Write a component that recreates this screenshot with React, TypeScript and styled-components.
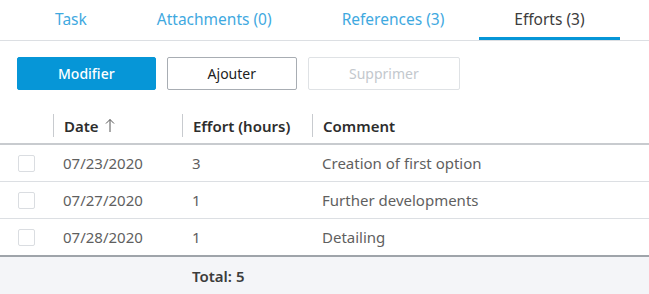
import * as React from 'react';
import styled, { createGlobalStyle } from 'styled-components';

const GlobalStyle = createGlobalStyle`
  body {
    margin: 0;
    background: #fff;
    font-family: "Noto Sans", "Open Sans", sans-serif;
    font-size: 15px;
    color: #3c3c3c;
  }
`;

const Page = styled.div`
  width: 649px;
  height: 294px;
  overflow: hidden;
  display: flex;
  flex-direction: column;
`;

const TabBar = styled.div`
  display: flex;
  padding-left: 20px;
  border-bottom: 1px solid #dcdfe3;
`;

const Tab = styled.div<{ $active?: boolean }>`
  height: 37px;
  padding: 0 35px;
  display: flex;
  align-items: center;
  justify-content: center;
  font-size: 15.5px;
  color: ${p => (p.$active ? '#3c3c3c' : '#3fa9df')};
  border-bottom: 3px solid ${p => (p.$active ? '#0696d7' : 'transparent')};
`;

const Toolbar = styled.div`
  display: flex;
  gap: 11px;
  padding: 16px 17px 0;
`;

const Button = styled.button<{ $variant?: 'primary' | 'default' | 'disabled' }>`
  height: 33px;
  padding: 0 40px;
  border-radius: 2px;
  font-family: inherit;
  font-size: 14px;
  font-weight: ${p => (p.$variant === 'primary' ? 500 : 400)};
  cursor: ${p => (p.$variant === 'disabled' ? 'default' : 'pointer')};
  background: ${p => (p.$variant === 'primary' ? '#0696d7' : '#fff')};
  color: ${p =>
    p.$variant === 'primary' ? '#fff' : p.$variant === 'disabled' ? '#c3c8cd' : '#222'};
  border: 1px solid
    ${p =>
      p.$variant === 'primary' ? '#0696d7' : p.$variant === 'disabled' ? '#dfe2e5' : '#a8adb3'};
`;

const Table = styled.div`
  margin-top: 18px;
  display: flex;
  flex-direction: column;
`;

const Row = styled.div<{ $head?: boolean }>`
  display: grid;
  grid-template-columns: 53px 129px 130px 1fr;
  align-items: center;
  height: ${p => (p.$head ? '35px' : '36px')};
  border-bottom: ${p => (p.$head ? '2px solid #c8cbcf' : '1px solid #dcdfe3')};
`;

const HeadCell = styled.div<{ $sep?: boolean }>`
  display: flex;
  align-items: center;
  gap: 6px;
  height: 23px;
  padding-left: 10px;
  border-left: ${p => (p.$sep ? '1px solid #c8cbcf' : 'none')};
  font-weight: 600;
  color: #2d2d2d;
`;

const Cell = styled.div`
  padding-left: 10px;
  color: #5f5f5f;
`;

const CheckCell = styled.div`
  padding-left: 18px;
  display: flex;
  align-items: center;
`;

const Checkbox = styled.span`
  width: 15px;
  height: 15px;
  border: 1px solid #dadde1;
  border-radius: 2px;
  background: #fff;
`;

const Footer = styled.div`
  flex: 1;
  display: grid;
  grid-template-columns: 53px 129px 1fr;
  align-items: center;
  background: #f4f5f8;
  border-top: 2px solid #9fa4aa;
  margin-top: -1px;
`;

const Total = styled.div`
  grid-column: 3;
  padding-left: 10px;
  font-weight: 600;
  color: #3c3c3c;
`;

const SortUp = () => (
  <svg width="10" height="15" viewBox="0 0 10 15" fill="none" stroke="#555" strokeWidth="1">
    <path d="M5 1.5 V14" />
    <path d="M1 5.5 L5 1.5 L9 5.5" />
  </svg>
);

const efforts = [
  { date: '07/23/2020', hours: 3, comment: 'Creation of first option' },
  { date: '07/27/2020', hours: 1, comment: 'Further developments' },
  { date: '07/28/2020', hours: 1, comment: 'Detailing' },
];

const App: React.FC = () => (
  <Page>
    <GlobalStyle />
    <TabBar>
      <Tab>Task</Tab>
      <Tab>Attachments (0)</Tab>
      <Tab>References (3)</Tab>
      <Tab $active>Efforts (3)</Tab>
    </TabBar>
    <Toolbar>
      <Button $variant="primary">Modifier</Button>
      <Button>Ajouter</Button>
      <Button $variant="disabled">Supprimer</Button>
    </Toolbar>
    <Table>
      <Row $head>
        <div />
        <HeadCell $sep>
          Date <SortUp />
        </HeadCell>
        <HeadCell $sep>Effort (hours)</HeadCell>
        <HeadCell $sep>Comment</HeadCell>
      </Row>
      {efforts.map(e => (
        <Row key={e.date}>
          <CheckCell>
            <Checkbox />
          </CheckCell>
          <Cell>{e.date}</Cell>
          <Cell>{e.hours}</Cell>
          <Cell>{e.comment}</Cell>
        </Row>
      ))}
    </Table>
    <Footer>
      <Total>Total: 5</Total>
    </Footer>
  </Page>
);

export default App;
